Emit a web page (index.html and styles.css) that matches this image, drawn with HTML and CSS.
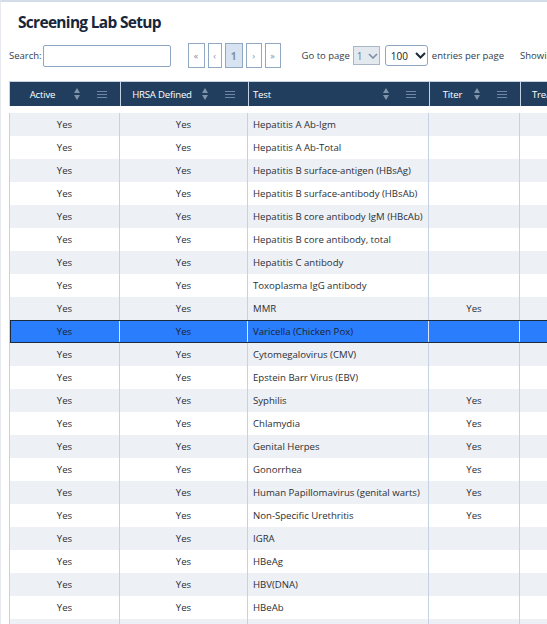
FILE: index.html
```html
<!DOCTYPE html>
<html>
<head>
<meta charset="utf-8">
<link rel="stylesheet" href="styles.css">
</head>
<body>
<div class="page">
  <h1 class="title">Screening Lab Setup</h1>
  <div class="toolbar">
    <label class="search">Search:<input class="search-input" type="text"></label>
    <div class="pager">
      <span class="pbtn w17">&laquo;</span>
      <span class="pbtn w14">&lsaquo;</span>
      <span class="pbtn w18 active">1</span>
      <span class="pbtn w16">&rsaquo;</span>
      <span class="pbtn w16">&raquo;</span>
    </div>
    <span class="goto">Go to page</span>
    <span class="sel sel-page">1<svg width="10" height="6" viewBox="0 0 10 6"><path d="M1 1l4 4 4-4" fill="none" stroke="#7b8ea5" stroke-width="1.6"/></svg></span>
    <span class="sel sel-size">100<svg width="11" height="7" viewBox="0 0 11 7"><path d="M1 1l4.5 4.5L10 1" fill="none" stroke="#1c2b3c" stroke-width="2"/></svg></span>
    <span class="entries">entries per page</span>
    <span class="showing">Showing 1 to 24 of 24 entries</span>
  </div>
  <div class="grid">
    <div class="row head">
      <div class="th center"><span class="lbl">Active</span><span class="sort"></span><span class="menu"></span></div>
      <div class="th center"><span class="lbl">HRSA Defined</span><span class="sort"></span><span class="menu"></span></div>
      <div class="th"><span class="lbl">Test</span><span class="sort"></span><span class="menu"></span></div>
      <div class="th center"><span class="lbl">Titer</span><span class="sort"></span><span class="menu"></span></div>
      <div class="th th-last"><span class="lbl">Treatment</span><span class="sort"></span><span class="menu"></span></div>
    </div>
    <div class="body">
      <div class="row"><div class="td c">Yes</div><div class="td c">Yes</div><div class="td">Hepatitis A Ab-Igm</div><div class="td c"></div><div class="td"></div></div>
      <div class="row"><div class="td c">Yes</div><div class="td c">Yes</div><div class="td">Hepatitis A Ab-Total</div><div class="td c"></div><div class="td"></div></div>
      <div class="row"><div class="td c">Yes</div><div class="td c">Yes</div><div class="td">Hepatitis B surface-antigen (HBsAg)</div><div class="td c"></div><div class="td"></div></div>
      <div class="row"><div class="td c">Yes</div><div class="td c">Yes</div><div class="td">Hepatitis B surface-antibody (HBsAb)</div><div class="td c"></div><div class="td"></div></div>
      <div class="row"><div class="td c">Yes</div><div class="td c">Yes</div><div class="td">Hepatitis B core antibody IgM (HBcAb)</div><div class="td c"></div><div class="td"></div></div>
      <div class="row"><div class="td c">Yes</div><div class="td c">Yes</div><div class="td">Hepatitis B core antibody, total</div><div class="td c"></div><div class="td"></div></div>
      <div class="row"><div class="td c">Yes</div><div class="td c">Yes</div><div class="td">Hepatitis C antibody</div><div class="td c"></div><div class="td"></div></div>
      <div class="row"><div class="td c">Yes</div><div class="td c">Yes</div><div class="td">Toxoplasma IgG antibody</div><div class="td c"></div><div class="td"></div></div>
      <div class="row"><div class="td c">Yes</div><div class="td c">Yes</div><div class="td">MMR</div><div class="td c">Yes</div><div class="td"></div></div>
      <div class="row selected"><div class="td c">Yes</div><div class="td c">Yes</div><div class="td">Varicella (Chicken Pox)</div><div class="td c"></div><div class="td"></div></div>
      <div class="row"><div class="td c">Yes</div><div class="td c">Yes</div><div class="td">Cytomegalovirus (CMV)</div><div class="td c"></div><div class="td"></div></div>
      <div class="row"><div class="td c">Yes</div><div class="td c">Yes</div><div class="td">Epstein Barr Virus (EBV)</div><div class="td c"></div><div class="td"></div></div>
      <div class="row"><div class="td c">Yes</div><div class="td c">Yes</div><div class="td">Syphilis</div><div class="td c">Yes</div><div class="td"></div></div>
      <div class="row"><div class="td c">Yes</div><div class="td c">Yes</div><div class="td">Chlamydia</div><div class="td c">Yes</div><div class="td"></div></div>
      <div class="row"><div class="td c">Yes</div><div class="td c">Yes</div><div class="td">Genital Herpes</div><div class="td c">Yes</div><div class="td"></div></div>
      <div class="row"><div class="td c">Yes</div><div class="td c">Yes</div><div class="td">Gonorrhea</div><div class="td c">Yes</div><div class="td"></div></div>
      <div class="row"><div class="td c">Yes</div><div class="td c">Yes</div><div class="td">Human Papillomavirus (genital warts)</div><div class="td c">Yes</div><div class="td"></div></div>
      <div class="row"><div class="td c">Yes</div><div class="td c">Yes</div><div class="td">Non-Specific Urethritis</div><div class="td c">Yes</div><div class="td"></div></div>
      <div class="row"><div class="td c">Yes</div><div class="td c">Yes</div><div class="td">IGRA</div><div class="td c"></div><div class="td"></div></div>
      <div class="row"><div class="td c">Yes</div><div class="td c">Yes</div><div class="td">HBeAg</div><div class="td c"></div><div class="td"></div></div>
      <div class="row"><div class="td c">Yes</div><div class="td c">Yes</div><div class="td">HBV(DNA)</div><div class="td c"></div><div class="td"></div></div>
      <div class="row"><div class="td c">Yes</div><div class="td c">Yes</div><div class="td">HBeAb</div><div class="td c"></div><div class="td"></div></div>
      <div class="row"><div class="td c">Yes</div><div class="td c">Yes</div><div class="td">Hepatitis D</div><div class="td c"></div><div class="td"></div></div>
    </div>
  </div>
</div>
</body>
</html>
```
FILE: styles.css
```css
html, body {
  margin: 0;
  padding: 0;
  background: #fff;
  overflow: hidden;
  height: 624px;
}
body {
  font-family: "Open Sans", "Noto Sans", sans-serif;
  color: #2b2f36;
}
.page {
  border-top: 2px solid #d3dde9;
  border-left: 1px solid #e6e9ee;
  margin-left: 0;
  padding-left: 8px;
  width: 900px;
}
.title {
  margin: 0;
  padding: 9px 0 0 9px;
  font-size: 15.5px;
  letter-spacing: -0.7px;
  line-height: 22px;
  font-weight: 700;
  color: #17263a;
}
.toolbar {
  display: flex;
  align-items: center;
  height: 25px;
  margin-top: 10px;
  font-size: 9.5px;
  white-space: nowrap;
}
.search {
  display: flex;
  align-items: center;
  color: #2f3d50;
}
.search-input {
  width: 126px;
  height: 20px;
  margin: 0 0 0 1px;
  padding: 0;
  border: 1px solid #8ea6c2;
  border-radius: 2px;
  box-sizing: content-box;
}
.pager {
  display: flex;
  gap: 3px;
  margin-left: 17px;
}
.pbtn {
  display: flex;
  align-items: center;
  justify-content: center;
  height: 23px;
  border: 1px solid #91a8c3;
  background: #fff;
  color: #7f91a6;
  font-size: 9px;
  box-sizing: content-box;
}
.pbtn.active {
  background: #d7e3f0;
  font-size: 10px;
  font-weight: 700;
}
.w17 { width: 15px; }
.w14 { width: 12px; }
.w18 { width: 16px; }
.w16 { width: 14px; }
.goto {
  margin-left: 21px;
  color: #2f3d50;
}
.sel {
  display: flex;
  align-items: center;
  gap: 5px;
  box-sizing: border-box;
  font-size: 10px;
}
.sel-page {
  margin-left: 3px;
  width: 27px;
  height: 19px;
  padding-left: 3px;
  background: #e4e9ef;
  border: 1px solid #a9b6c6;
  color: #6b7d93;
}
.sel-size {
  margin-left: 5px;
  width: 43px;
  height: 21px;
  padding-left: 5px;
  gap: 7px;
  background: #fff;
  border: 1px solid #8ea6c2;
  border-radius: 3px;
  color: #222;
}
.entries {
  margin-left: 4px;
  color: #2f3d50;
}
.showing {
  margin-left: 16px;
  color: #2f3d50;
}
.grid {
  margin-top: 13px;
  margin-left: 1px;
  font-size: 9.6px;
}
.row {
  display: grid;
  grid-template-columns: 110px 128px 181px 91px 200px;
  height: 23px;
}
.head {
  height: 25px;
  background: #213e5e;
  border: 1px solid #c4d2e3;
  border-bottom: none;
  box-sizing: border-box;
  margin-left: -1px;
  grid-template-columns: 111px 128px 181px 91px 200px;
}
.th {
  display: flex;
  align-items: center;
  color: #fff;
  border-right: 1px solid #c4d2e3;
  padding-left: 1px;
  position: relative;
  letter-spacing: -0.2px;
}
.th .lbl {
  flex: 1;
}
.th.center .lbl {
  text-align: center;
}
.th:nth-child(3) {
  padding-left: 4px;
}
.th.th-last {
  padding-left: 11px;
}
.sort {
  width: 7px;
  height: 12px;
  margin-right: 16px;
  position: relative;
}
.sort::before, .sort::after {
  content: "";
  position: absolute;
  left: 0;
  border-left: 3.5px solid transparent;
  border-right: 3.5px solid transparent;
}
.sort::before {
  top: 0;
  border-bottom: 5px solid #8093aa;
}
.sort::after {
  bottom: 0;
  border-top: 5px solid #8093aa;
}
.menu {
  width: 10px;
  height: 7px;
  margin-right: 13px;
  border-top: 1px solid #6f87a2;
  border-bottom: 1px solid #6f87a2;
  box-sizing: border-box;
  position: relative;
}
.menu::before {
  content: "";
  position: absolute;
  left: 0;
  right: 0;
  top: 2px;
  height: 1px;
  background: #6f87a2;
}
.body {
  margin-top: 7px;
  border-left: 1px solid #c4d2e3;
  margin-left: -1px;
}
.body .row:nth-child(odd) {
  background: #edf0f5;
}
.td {
  display: flex;
  align-items: center;
  padding-left: 5px;
  border-right: 1px solid #c4d2e3;
  color: #2b2f36;
  white-space: nowrap;
  overflow: hidden;
}
.td.c {
  justify-content: center;
  padding-left: 0;
}
.body .row.selected {
  background: #2a7dfd;
  outline: 1px solid #1b2a3b;
  outline-offset: -1px;
  position: relative;
}
.row.selected .td {
  border-right-color: #d9e6fb;
  color: #1c2430;
}
```
